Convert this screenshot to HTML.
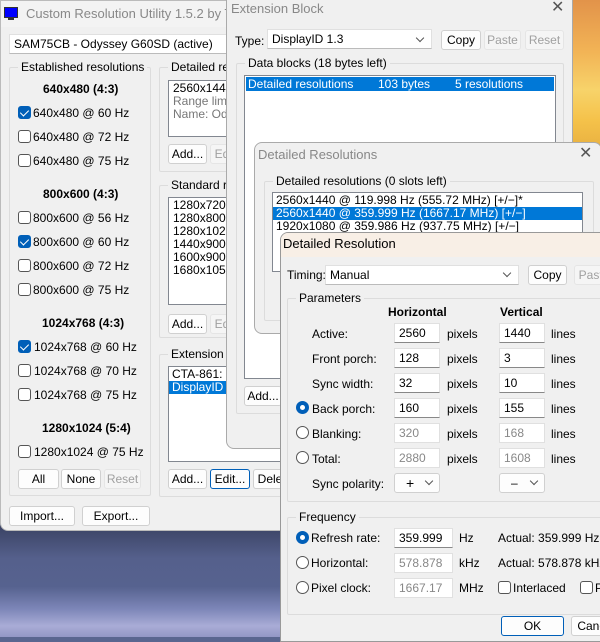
<!DOCTYPE html>
<html><head><meta charset="utf-8"><style>
*{box-sizing:border-box;margin:0;padding:0}
body{width:600px;height:637px;overflow:hidden;position:relative;font-family:"Liberation Sans",sans-serif;font-size:12px;color:#000;background:#5a6690}
.a{position:absolute}
.t{position:absolute;white-space:nowrap;line-height:14px}
.win{position:absolute;background:#f0f0f0;border:1px solid #aaa;overflow:hidden}
.btn{position:absolute;height:20px;background:#fdfdfd;border:1px solid #d0d0d0;border-radius:3px;text-align:center;line-height:18px;white-space:nowrap;overflow:hidden}
.dis{color:#a0a0a0;background:#f5f5f5;border-color:#e5e5e5}
.in{position:absolute;height:20px;background:#fff;border:1px solid #e0e0e0;border-bottom:1px solid #888;padding-left:4px;line-height:18px;white-space:nowrap}
.gin{color:#888;border-bottom-color:#e0e0e0}
.gb{position:absolute;border:1px solid #dcdcdc;border-radius:2px}
.gl{position:absolute;top:-8px;left:8px;background:#f0f0f0;padding:0 3px;line-height:14px;white-space:nowrap}
.cb{position:absolute;width:13px;height:13px;border:1px solid #555;border-radius:3px;background:#fff}
.cb.on{background:#005fb8;border-color:#005fb8}
.cb.on:after{content:"";position:absolute;left:3px;top:1px;width:4px;height:7px;border:solid #fff;border-width:0 1px 1px 0;transform:rotate(45deg)}
.rd{position:absolute;width:13px;height:13px;border:1px solid #555;border-radius:50%;background:#fff}
.rd.on{background:#005fb8;border-color:#005fb8}
.rd.on:after{content:"";position:absolute;left:3px;top:3px;width:5px;height:5px;border-radius:50%;background:#fff}
.list{position:absolute;background:#fff;border:1px solid #828790;overflow:hidden;white-space:nowrap}
.sel{background:#0078d7;color:#fff}
.b{font-weight:bold}
.x{position:absolute;font-size:16px;color:#555;line-height:16px}
.chev{position:absolute;width:6px;height:6px;border:solid #555;border-width:0 1px 1px 0;transform:rotate(45deg)}
</style></head><body>
<!-- desktop -->
<div class="a" style="left:560px;top:0;width:40px;height:150px;background:linear-gradient(180deg,#e2934a 0%,#f2b456 35%,#f7d36a 60%,#f5c24a 80%,#e8b040 100%)"></div>
<div class="a" style="left:0;top:525px;width:290px;height:112px;background:linear-gradient(180deg,#3a4263 0%,#55608c 30%,#56628f 55%,#7d86b8 75%,#a9acd6 90%,#9397c6 100%)"></div>

<!-- main window -->
<div class="win" style="left:0;top:0;width:300px;height:531px;border-radius:0 0 8px 8px;border-color:#bbb">
 <div class="a" style="left:0;top:0;width:300px;height:26px;background:#f3f3f3"></div>
 <div class="a" style="left:3px;top:6px;width:14px;height:11px;background:#0000ff;border:1px solid #333"></div>
 <div class="a" style="left:7px;top:17px;width:6px;height:2px;background:#333"></div>
 <div class="t" style="left:25px;top:6px;font-size:13px;color:#888">Custom Resolution Utility 1.5.2 by Toast</div>
 <div class="in" style="left:8px;top:33px;width:290px;height:20px;border-bottom-color:#bbb">SAM75CB - Odyssey G60SD (active)</div>

 <div class="gb" style="left:8px;top:66px;width:142px;height:429px"><div class="gl">Established resolutions</div></div>
 <div class="t b" style="left:42px;top:81px">640x480 (4:3)</div>
 <div class="cb on" style="left:17px;top:105px"></div><div class="t" style="left:32px;top:105px">640x480 @ 60 Hz</div>
 <div class="cb" style="left:17px;top:129px"></div><div class="t" style="left:32px;top:129px">640x480 @ 72 Hz</div>
 <div class="cb" style="left:17px;top:153px"></div><div class="t" style="left:32px;top:153px">640x480 @ 75 Hz</div>
 <div class="t b" style="left:42px;top:186px">800x600 (4:3)</div>
 <div class="cb" style="left:17px;top:210px"></div><div class="t" style="left:32px;top:210px">800x600 @ 56 Hz</div>
 <div class="cb on" style="left:17px;top:234px"></div><div class="t" style="left:32px;top:234px">800x600 @ 60 Hz</div>
 <div class="cb" style="left:17px;top:258px"></div><div class="t" style="left:32px;top:258px">800x600 @ 72 Hz</div>
 <div class="cb" style="left:17px;top:282px"></div><div class="t" style="left:32px;top:282px">800x600 @ 75 Hz</div>
 <div class="t b" style="left:41px;top:315px">1024x768 (4:3)</div>
 <div class="cb on" style="left:17px;top:339px"></div><div class="t" style="left:33px;top:339px">1024x768 @ 60 Hz</div>
 <div class="cb" style="left:17px;top:363px"></div><div class="t" style="left:33px;top:363px">1024x768 @ 70 Hz</div>
 <div class="cb" style="left:17px;top:387px"></div><div class="t" style="left:33px;top:387px">1024x768 @ 75 Hz</div>
 <div class="t b" style="left:41px;top:420px">1280x1024 (5:4)</div>
 <div class="cb" style="left:17px;top:444px"></div><div class="t" style="left:33px;top:444px">1280x1024 @ 75 Hz</div>
 <div class="btn" style="left:17px;top:468px;width:41px">All</div>
 <div class="btn" style="left:60px;top:468px;width:40px">None</div>
 <div class="btn dis" style="left:103px;top:468px;width:37px">Reset</div>
 <div class="btn" style="left:8px;top:505px;width:66px">Import...</div>
 <div class="btn" style="left:81px;top:505px;width:68px">Export...</div>

 <div class="gb" style="left:158px;top:66px;width:140px;height:105px"><div class="gl">Detailed resolutions</div></div>
 <div class="list" style="left:167px;top:79px;width:130px;height:57px;padding:1px 4px;line-height:13px">2560x1440 @ 359.999 Hz<br><span style="color:#777">Range limits</span><br><span style="color:#777">Name: Odyssey G60SD</span></div>
 <div class="btn" style="left:167px;top:143px;width:39px">Add...</div>
 <div class="btn dis" style="left:209px;top:143px;width:40px">Edit...</div>

 <div class="gb" style="left:158px;top:184px;width:140px;height:153px"><div class="gl">Standard resolutions</div></div>
 <div class="list" style="left:167px;top:196px;width:130px;height:108px;padding:1px 4px;line-height:13px">1280x720 (16:9)<br>1280x800 (16:10)<br>1280x1024 (5:4)<br>1440x900 (16:10)<br>1600x900 (16:9)<br>1680x1050 (16:10)</div>
 <div class="btn" style="left:167px;top:313px;width:39px">Add...</div>
 <div class="btn dis" style="left:209px;top:313px;width:40px">Edit...</div>

 <div class="gb" style="left:158px;top:353px;width:140px;height:143px"><div class="gl">Extension blocks</div></div>
 <div class="list" style="left:167px;top:365px;width:130px;height:96px;line-height:13px;padding-top:1px"><div style="padding-left:3px">CTA-861: 1 data block</div><div class="sel" style="padding-left:3px">DisplayID 1.3: 1 data block</div></div>
 <div class="btn" style="left:167px;top:468px;width:39px">Add...</div>
 <div class="btn" style="left:209px;top:468px;width:40px;border-color:#005fb8">Edit...</div>
 <div class="btn" style="left:252px;top:468px;width:44px">Delete</div>
</div>

<!-- Extension Block window -->
<div class="win" style="left:226px;top:-1px;width:347px;height:450px;border-radius:0 0 8px 8px">
 <div class="t" style="left:4px;top:2px;font-size:13px;color:#888">Extension Block</div>
 <div class="x" style="left:324px;top:0px">✕</div>
 <div class="t" style="left:8px;top:34px">Type:</div>
 <div class="in" style="left:40px;top:29px;width:165px;border-bottom-color:#bbb">DisplayID 1.3</div>
 <div class="chev" style="left:190px;top:35px"></div>
 <div class="btn" style="left:214px;top:30px;width:40px">Copy</div>
 <div class="btn dis" style="left:257px;top:30px;width:37px">Paste</div>
 <div class="btn dis" style="left:298px;top:30px;width:39px">Reset</div>
 <div class="gb" style="left:9px;top:63px;width:328px;height:351px"><div class="gl">Data blocks (18 bytes left)</div></div>
 <div class="list" style="left:17px;top:75px;width:312px;height:304px;padding:1px">
  <div class="sel" style="height:14px;line-height:14px;position:relative"><span class="t" style="left:2px;top:0">Detailed resolutions</span><span class="t" style="left:132px;top:0">103 bytes</span><span class="t" style="left:209px;top:0">5 resolutions</span></div>
 </div>
 <div class="btn" style="left:17px;top:386px;width:38px">Add...</div>
</div>

<!-- Detailed Resolutions window -->
<div class="win" style="left:254px;top:142px;width:348px;height:192px;border-radius:8px 8px 8px 8px">
 <div class="t" style="left:3px;top:5px;font-size:13px;color:#888">Detailed Resolutions</div>
 <div class="x" style="left:324px;top:3px">✕</div>
 <div class="gb" style="left:9px;top:38px;width:330px;height:140px"><div class="gl">Detailed resolutions (0 slots left)</div></div>
 <div class="list" style="left:17px;top:49px;width:311px;height:80px;line-height:13px;padding-top:1px">
  <div style="padding-left:3px">2560x1440 @ 119.998 Hz (555.72 MHz) [+/−]*</div>
  <div class="sel" style="padding-left:3px">2560x1440 @ 359.999 Hz (1667.17 MHz) [+/−]</div>
  <div style="padding-left:3px">1920x1080 @ 359.986 Hz (937.75 MHz) [+/−]</div>
 </div>
</div>

<!-- Detailed Resolution window -->
<div class="win" style="left:280px;top:232px;width:322px;height:410px;border-radius:8px 0 0 0;border-color:#999">
 <div class="a" style="left:0;top:0;width:322px;height:24px;background:#f8efe6"></div>
 <div class="t" style="left:2px;top:4px;font-size:13px">Detailed Resolution</div>
 <div class="t" style="left:6px;top:35px">Timing:</div>
 <div class="in" style="left:44px;top:32px;width:194px;border-bottom-color:#bbb">Manual</div>
 <div class="chev" style="left:223px;top:37px"></div>
 <div class="btn" style="left:247px;top:32px;width:39px">Copy</div>
 <div class="btn dis" style="left:293px;top:32px;width:40px">Paste</div>

 <div class="gb" style="left:6px;top:65px;width:330px;height:204px"><div class="gl">Parameters</div></div>
 <div class="t b" style="left:107px;top:72px">Horizontal</div>
 <div class="t b" style="left:219px;top:72px">Vertical</div>

 <div class="t" style="left:31px;top:94px">Active:</div>
 <div class="in" style="left:113px;top:90px;width:46px">2560</div><div class="t" style="left:166px;top:94px">pixels</div>
 <div class="in" style="left:218px;top:90px;width:46px">1440</div><div class="t" style="left:270px;top:94px">lines</div>

 <div class="t" style="left:31px;top:119px">Front porch:</div>
 <div class="in" style="left:113px;top:115px;width:46px">128</div><div class="t" style="left:166px;top:119px">pixels</div>
 <div class="in" style="left:218px;top:115px;width:46px">3</div><div class="t" style="left:270px;top:119px">lines</div>

 <div class="t" style="left:31px;top:144px">Sync width:</div>
 <div class="in" style="left:113px;top:140px;width:46px">32</div><div class="t" style="left:166px;top:144px">pixels</div>
 <div class="in" style="left:218px;top:140px;width:46px">10</div><div class="t" style="left:270px;top:144px">lines</div>

 <div class="rd on" style="left:15px;top:168px"></div><div class="t" style="left:31px;top:169px">Back porch:</div>
 <div class="in" style="left:113px;top:165px;width:46px">160</div><div class="t" style="left:166px;top:169px">pixels</div>
 <div class="in" style="left:218px;top:165px;width:46px">155</div><div class="t" style="left:270px;top:169px">lines</div>

 <div class="rd" style="left:15px;top:193px"></div><div class="t" style="left:31px;top:194px">Blanking:</div>
 <div class="in gin" style="left:113px;top:190px;width:46px">320</div><div class="t" style="left:166px;top:194px">pixels</div>
 <div class="in gin" style="left:218px;top:190px;width:46px">168</div><div class="t" style="left:270px;top:194px">lines</div>

 <div class="rd" style="left:15px;top:218px"></div><div class="t" style="left:31px;top:219px">Total:</div>
 <div class="in gin" style="left:113px;top:215px;width:46px">2880</div><div class="t" style="left:166px;top:219px">pixels</div>
 <div class="in gin" style="left:218px;top:215px;width:46px">1608</div><div class="t" style="left:270px;top:219px">lines</div>

 <div class="t" style="left:31px;top:244px">Sync polarity:</div>
 <div class="btn" style="left:113px;top:240px;width:46px;text-align:left;padding-left:11px;font-size:14px">+</div>
 <div class="chev" style="left:145px;top:245px"></div>
 <div class="btn" style="left:218px;top:240px;width:46px;text-align:left;padding-left:11px">–</div>
 <div class="chev" style="left:250px;top:245px"></div>

 <div class="gb" style="left:6px;top:284px;width:330px;height:98px"><div class="gl">Frequency</div></div>
 <div class="rd on" style="left:15px;top:298px"></div><div class="t" style="left:30px;top:298px">Refresh rate:</div>
 <div class="in" style="left:113px;top:295px;width:59px">359.999</div><div class="t" style="left:178px;top:298px">Hz</div>
 <div class="t" style="left:217px;top:298px">Actual: 359.999 Hz</div>
 <div class="rd" style="left:15px;top:323px"></div><div class="t" style="left:30px;top:323px">Horizontal:</div>
 <div class="in gin" style="left:113px;top:320px;width:59px">578.878</div><div class="t" style="left:178px;top:323px">kHz</div>
 <div class="t" style="left:217px;top:323px">Actual: 578.878 kHz</div>
 <div class="rd" style="left:15px;top:348px"></div><div class="t" style="left:30px;top:348px">Pixel clock:</div>
 <div class="in gin" style="left:113px;top:345px;width:59px">1667.17</div><div class="t" style="left:178px;top:348px">MHz</div>
 <div class="cb" style="left:217px;top:348px"></div><div class="t" style="left:232px;top:348px">Interlaced</div>
 <div class="cb" style="left:299px;top:348px"></div><div class="t" style="left:314px;top:348px">P</div>
 <div class="btn" style="left:220px;top:383px;width:63px;border-color:#005fb8">OK</div>
 <div class="btn" style="left:290px;top:383px;width:50px">Cancel</div>
</div>
</body></html>
